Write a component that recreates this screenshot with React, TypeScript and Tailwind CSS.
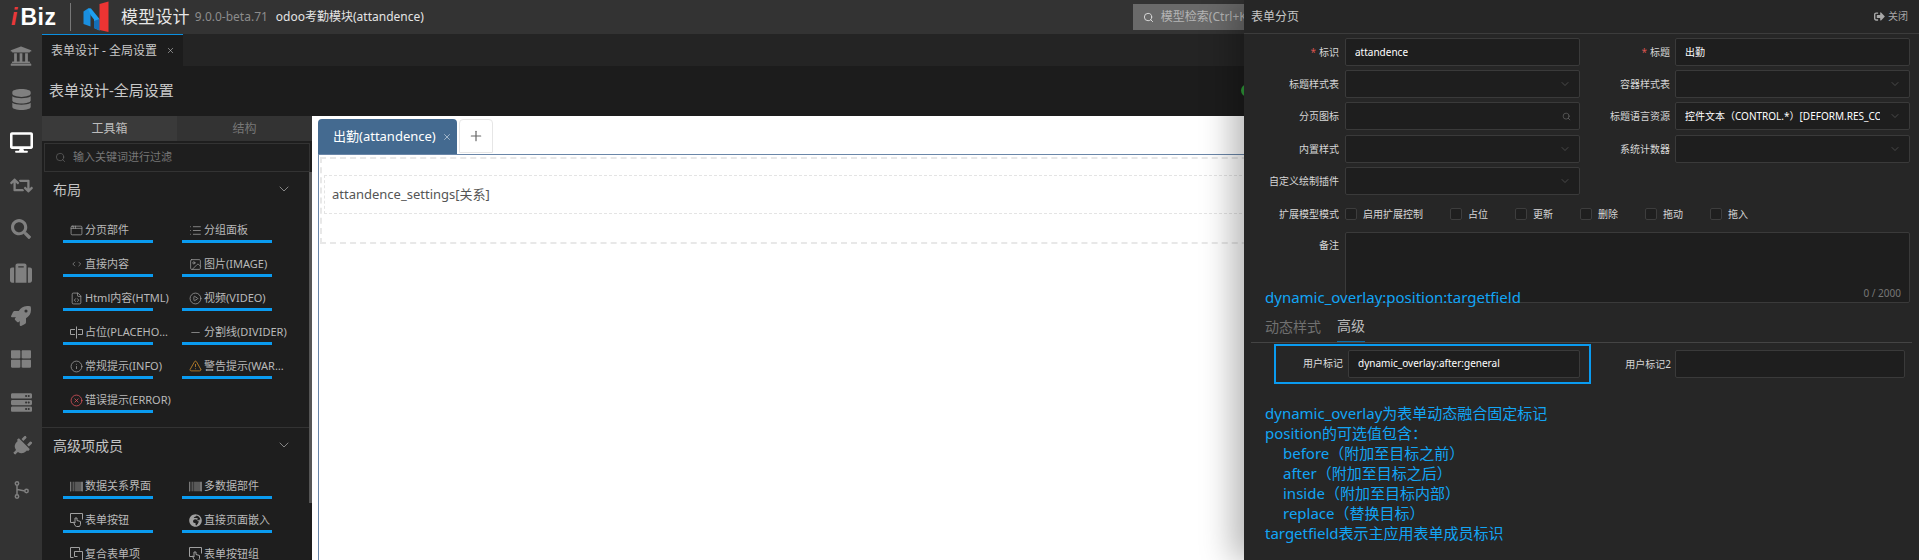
import type { ReactNode } from "react";
import {
  FaBarcode,
  FaDatabase,
  FaDesktop,
  FaGlobeAfrica,
  FaPlug,
  FaRetweet,
  FaRocket,
  FaSearch,
  FaServer,
  FaSignOutAlt,
  FaSuitcase,
  FaThLarge,
  FaUniversity,
} from "react-icons/fa";
import {
  AppWindow,
  ChevronDown,
  ChevronLeft,
  ChevronRight,
  CirclePlay,
  CircleX,
  FileCode,
  Image,
  Info,
  List,
  Minus,
  Plus,
  Search,
  TriangleAlert,
  X,
} from "lucide-react";

function BranchIcon() {
  return (
    <svg width="15" height="18" viewBox="0 0 15 18" fill="none" stroke="currentColor" strokeWidth="1.5">
      <circle cx="3" cy="2.5" r="1.7" />
      <circle cx="3" cy="15.5" r="1.7" />
      <circle cx="12.5" cy="10" r="1.7" />
      <path d="M3 4.2V13.8M3.5 8.5L10.8 10" />
    </svg>
  );
}

const railIcons: ReactNode[] = [
  <FaUniversity size={22} />,
  <FaDatabase size={21} />,
  <FaDesktop size={23} />,
  <FaRetweet size={23} />,
  <FaSearch size={20} />,
  <FaSuitcase size={22} />,
  <FaRocket size={20} />,
  <FaThLarge size={20} />,
  <FaServer size={21} />,
  <FaPlug size={21} className="rotate-45" />,
  <BranchIcon />,
];

function CodeIcon() {
  return (
    <span className="flex w-[13px] items-center">
      <ChevronLeft size={8} strokeWidth={2} />
      <ChevronRight size={8} strokeWidth={2} className="-ml-[2px]" />
    </span>
  );
}

function PlaceholderIcon() {
  return (
    <svg width="13" height="13" viewBox="0 0 13 13" fill="none" stroke="currentColor">
      <path d="M6.5 0.5v12M5 3.5H0.5v5H5M8 3.5h4.5v5H8" />
    </svg>
  );
}

function PointerBoxIcon() {
  return (
    <svg width="13" height="14" viewBox="0 0 13 14" fill="none" stroke="currentColor">
      <path d="M4 9.5H0.5v-9h12v6" />
      <path d="M5 5v5L3.5 9 5 12.5l1.5 1h3l1-2V8.5L7 7.5V5z" fill="#1e1e1e" />
    </svg>
  );
}

function CompoundIcon() {
  return (
    <svg width="13" height="14" viewBox="0 0 13 14" fill="none" stroke="currentColor">
      <path d="M3.5 10.5H0.5v-10h9v3" />
      <path d="M4.5 4.5h8v9h-6M4.5 4.5v5h3" />
    </svg>
  );
}

type ToolItem = { icon: ReactNode; label: string; wide?: boolean };

const layoutItems: ToolItem[] = [
  { icon: <AppWindow size={13} strokeWidth={1.4} />, label: "分页部件" },
  { icon: <List size={13} strokeWidth={1.4} />, label: "分组面板" },
  { icon: <CodeIcon />, label: "直接内容" },
  { icon: <Image size={13} strokeWidth={1.4} />, label: "图片(IMAGE)" },
  { icon: <FileCode size={13} strokeWidth={1.4} />, label: "Html内容(HTML)" },
  { icon: <CirclePlay size={13} strokeWidth={1.4} />, label: "视频(VIDEO)" },
  { icon: <PlaceholderIcon />, label: "占位(PLACEHOLDER)" },
  { icon: <Minus size={13} strokeWidth={1.4} />, label: "分割线(DIVIDER)" },
  { icon: <Info size={13} strokeWidth={1.4} />, label: "常规提示(INFO)" },
  {
    icon: <TriangleAlert size={14} strokeWidth={1.4} className="text-[#d8912a]" />,
    label: "警告提示(WARNING)",
  },
  {
    icon: <CircleX size={13} strokeWidth={1.4} className="text-[#e0555f]" />,
    label: "错误提示(ERROR)",
    wide: true,
  },
];

const advancedItems: ToolItem[] = [
  { icon: <FaBarcode size={13} />, label: "数据关系界面" },
  { icon: <FaBarcode size={13} />, label: "多数据部件" },
  { icon: <PointerBoxIcon />, label: "表单按钮" },
  { icon: <FaGlobeAfrica size={13} />, label: "直接页面嵌入" },
  { icon: <CompoundIcon />, label: "复合表单项" },
  { icon: <PointerBoxIcon />, label: "表单按钮组" },
];

function ToolGrid({ items }: { items: ToolItem[] }) {
  return (
    <div className="grid grid-cols-[119px_119px] pl-[21px]">
      {items.map((item) => (
        <div key={item.label} className="flex h-[34px] flex-col justify-end">
          <div className="flex h-[18px] items-center gap-[2px] pl-[7px] text-[11px] leading-[14px] text-[#b9b9b9]">
            <span className="flex w-[13px] shrink-0 justify-center text-[#a0a0a0]">{item.icon}</span>
            <span className={`truncate ${item.wide ? "w-[95px]" : "w-[85px]"}`}>{item.label}</span>
          </div>
          <div className="mt-px h-[3px] w-[90px] bg-[#0a9bf0]" />
        </div>
      ))}
    </div>
  );
}

function SectionHead({ title }: { title: string }) {
  return (
    <div className="flex h-[37px] items-start justify-between pl-[11px] pr-[17px] pt-[8px]">
      <span className="text-[14px] leading-[20px] text-[#c4c4c4]">{title}</span>
      <ChevronDown size={16} strokeWidth={1.2} className="mt-[1px] text-[#a0a0a0]" />
    </div>
  );
}

function FieldLabel({ text, required, width }: { text: string; required?: boolean; width: string }) {
  return (
    <div className={`${width} shrink-0 text-right text-[10px] leading-[28px] text-[#d6d6d6]`}>
      {required && <span className="mr-[3px] text-[#d9534f]">*</span>}
      {text}
    </div>
  );
}

function Field({
  value,
  icon,
  width = "w-[235px]",
}: {
  value?: string;
  icon?: ReactNode;
  width?: string;
}) {
  return (
    <div
      className={`${width} flex h-[28px] shrink-0 items-center justify-between overflow-hidden rounded-[2px] border border-[#3a3a3a] bg-[#1e1e1e] pl-[9px] pr-[8px] text-[10px] text-white`}
    >
      <span className="max-w-[195px] overflow-hidden whitespace-nowrap">{value}</span>
      {icon}
    </div>
  );
}

const chevron = <ChevronDown size={12} strokeWidth={1.2} className="shrink-0 text-[#666]" />;
const lens = <Search size={9} strokeWidth={1.5} className="shrink-0 text-[#777]" />;

function Check({ label }: { label: string }) {
  return (
    <div className="flex items-center gap-[6px] text-[10px] text-[#d6d6d6]">
      <span className="h-[12px] w-[12px] rounded-[2px] border border-[#3d3d3d] bg-[#1f1f1f]" />
      {label}
    </div>
  );
}

function Logo() {
  return (
    <svg width="36" height="34" viewBox="0 0 36 34" className="ml-[8px] shrink-0">
      <path d="M4.5 11.5L9 8.5H11.5V26.5L4.5 24Z" fill="#1a8fe0" />
      <path d="M9 8.5H12L20.5 19V30.5L15 28V19.5L11.5 15Z" fill="#1e9ff0" />
      <path d="M15 21L20.5 19V30.5L15 28Z" fill="#156fb8" />
      <path d="M20.5 4L29.5 1.5V32L20.5 30Z" fill="#ec3433" />
    </svg>
  );
}

export default function App() {
  return (
    <div className="relative h-[560px] w-[1919px] overflow-hidden bg-[#1c1c1c] font-['Noto_Sans','Noto_Sans_CJK_SC',sans-serif]">
      {/* 顶栏 */}
      <header className="flex h-[34px] items-center bg-[#333333]">
        <div className="ml-[11px] flex w-[47px] items-baseline font-['Liberation_Sans',sans-serif] text-[23px] font-bold leading-[30px] text-white">
          <span className="mr-[3px] italic text-[#e8383a]">i</span>
          <span className="tracking-[0.5px]">Biz</span>
        </div>
        <div className="ml-[12px] h-[28px] w-px bg-[#777]" />
        <Logo />
        <span className="ml-[6px] text-[17px] leading-[24px] tracking-[0.2px] text-[#e6e6e6]">模型设计</span>
        <span className="ml-[5px] text-[12px] text-[#8c8c8c]">9.0.0-beta.71</span>
        <span className="ml-[8px] text-[12px] text-[#e4e4e4]">odoo考勤模块(attandence)</span>
        <div className="ml-[709px] flex h-[26px] w-[200px] items-center gap-[7px] bg-[#6a6a6a] pl-[10px] text-[12px] text-[#b5b5b5]">
          <Search size={11} strokeWidth={2} className="text-[#e0e0e0]" />
          模型检索(Ctrl+K)
        </div>
      </header>

      <div className="flex h-[526px]">
        {/* 左侧图标栏 */}
        <nav className="flex w-[42px] shrink-0 flex-col bg-[#333333]">
          {railIcons.map((icon, i) => (
            <div
              key={i}
              className={`flex h-[43.4px] items-center justify-center ${i === 2 ? "text-white" : "text-[#808080]"}`}
            >
              {icon}
            </div>
          ))}
        </nav>

        <div className="flex min-w-0 flex-1 flex-col">
          {/* 标签栏 */}
          <div className="flex h-[32px] bg-[#242424]">
            <div className="flex w-[141px] items-center gap-[9px] border-t border-[#0a8fe0] bg-[#1c1c1c] pl-[9px] text-[12px] text-[#c8c8c8]">
              表单设计 - 全局设置
              <X size={9} strokeWidth={1.5} />
            </div>
          </div>

          <div className="flex h-[50px] items-center bg-[#1c1c1c] pb-[2px] pl-[7px]">
            <span className="text-[15px] leading-[20px] text-[#c8c8c8]">表单设计-全局设置</span>
            <span className="ml-[1067px] h-[13px] w-[13px] rounded-full bg-[#2f9e3a]" />
          </div>

          <div className="flex min-h-0 flex-1">
            {/* 工具箱 */}
            <aside className="relative flex w-[270px] shrink-0 flex-col overflow-hidden bg-[#1e1e1e]">
              <div className="flex h-[25px] shrink-0 text-[12px] leading-[25px]">
                <div className="w-[135px] bg-[#3a3a3a] text-center text-[#bdbdbd]">工具箱</div>
                <div className="w-[135px] bg-[#333333] text-center text-[#777]">结构</div>
              </div>
              <div className="mx-[2px] mt-[2px] flex h-[29px] shrink-0 items-center gap-[7px] border border-[#333] pl-[10px] text-[11px] text-[#777]">
                <Search size={11} strokeWidth={1.2} />
                输入关键词进行过滤
              </div>
              <div className="pr-[3px]">
                <SectionHead title="布局" />
                <ToolGrid items={layoutItems} />
                <div className="mt-[14px] h-px bg-[#333]" />
                <SectionHead title="高级项成员" />
                <ToolGrid items={advancedItems} />
              </div>
              <div className="absolute right-0 top-[56px] h-[331px] w-[3px] bg-[#555]" />
            </aside>

            {/* 表单画布 */}
            <main className="min-w-0 flex-1 bg-white pl-[6px] pt-[3px]">
              <div className="flex h-[35px]">
                <div className="flex w-[139px] items-center gap-[6px] rounded-t-[4px] bg-[#446a90] pl-[15px] text-[13px] text-white">
                  出勤(attandence)
                  <X size={10} strokeWidth={1.5} className="text-[#d8e2ee]" />
                </div>
                <div className="ml-[2px] flex h-[34px] w-[34px] items-center justify-center rounded-t-[4px] border border-[#e6e6e6] text-[#666]">
                  <Plus size={16} strokeWidth={1.8} />
                </div>
              </div>
              <div className="h-[410px] border-l border-t border-[#6a86a8] pl-px pt-[2px]">
                <div className="h-[87px] border-2 border-dashed border-[#e8e8e8] pl-[2px] pt-[16px]">
                  <div className="h-[39px] border border-dashed border-[#e4e4e4] pl-[7px] text-[13px] leading-[37px] text-[#555]">
                    attandence_settings[关系]
                  </div>
                </div>
              </div>
            </main>
          </div>
        </div>
      </div>

      {/* 右侧属性面板 */}
      <section className="absolute right-0 top-0 h-[560px] w-[675px] bg-[#262626] shadow-[-12px_0_30px_rgba(0,0,0,0.28)]">
        <div className="flex h-[34px] items-center justify-between border-b border-[#3c3c3c] pl-[7px] pr-[11px]">
          <span className="text-[12px] text-[#c8c8c8]">表单分页</span>
          <span className="flex items-center gap-[3px] text-[10px] text-[#a8a8a8]">
            <FaSignOutAlt size={11} />
            关闭
          </span>
        </div>
        <div className="flex flex-col gap-[4px] pt-[4px]">
          <div className="flex">
            <FieldLabel text="标识" required width="w-[95px]" />
            <div className="ml-[6px]"><Field value="attandence" /></div>
            <FieldLabel text="标题" required width="w-[90px]" />
            <div className="ml-[5px]"><Field value="出勤" /></div>
          </div>
          <div className="flex">
            <FieldLabel text="标题样式表" width="w-[95px]" />
            <div className="ml-[6px]"><Field icon={chevron} /></div>
            <FieldLabel text="容器样式表" width="w-[90px]" />
            <div className="ml-[5px]"><Field icon={chevron} /></div>
          </div>
          <div className="flex">
            <FieldLabel text="分页图标" width="w-[95px]" />
            <div className="ml-[6px]"><Field icon={lens} /></div>
            <FieldLabel text="标题语言资源" width="w-[90px]" />
            <div className="ml-[5px]">
              <Field value="控件文本（CONTROL.*）[DEFORM.RES_CONTROL]" icon={chevron} />
            </div>
          </div>
          <div className="mt-px flex">
            <FieldLabel text="内置样式" width="w-[95px]" />
            <div className="ml-[6px]"><Field icon={chevron} /></div>
            <FieldLabel text="系统计数器" width="w-[90px]" />
            <div className="ml-[5px]"><Field icon={chevron} /></div>
          </div>
          <div className="flex">
            <FieldLabel text="自定义绘制插件" width="w-[95px]" />
            <div className="ml-[6px]"><Field icon={chevron} /></div>
          </div>
        </div>

        <div className="mt-[13px] flex h-[12px] items-center">
          <div className="w-[95px] text-right text-[10px] text-[#d6d6d6]">扩展模型模式</div>
          <div className="ml-[6px] flex gap-[27px]">
            {["启用扩展控制", "占位", "更新", "删除", "拖动", "拖入"].map((c) => (
              <Check key={c} label={c} />
            ))}
          </div>
        </div>

        <div className="relative mt-[12px] flex h-[71px]">
          <div className="w-[95px] text-right text-[10px] leading-[26px] text-[#d6d6d6]">备注</div>
          <div className="relative ml-[6px] h-[71px] w-[565px] rounded-[2px] border border-[#3a3a3a] bg-[#1e1e1e]">
            <span className="absolute bottom-[1px] right-[8px] text-[10px] text-[#777]">0 / 2000</span>
          </div>
          <span className="absolute left-[21px] top-[55px] text-[15px] leading-[20px] text-[#12a5f5]">
            dynamic_overlay:position:targetfield
          </span>
        </div>

        <div className="ml-[7px] mr-[7px] flex h-[40px] items-end gap-[16px] border-b border-[#444] pl-[14px] text-[14px] leading-[31px]">
          <span className="text-[#707070]">动态样式</span>
          <span className="border-b border-[#0c6ca6] text-[#bcbcbc]">高级</span>
        </div>

        <div className="flex h-[40px] items-center pt-[1px]">
          <div className="ml-[30px] flex h-[40px] w-[317px] items-center border-2 border-[#0a9bf0]">
            <div className="w-[67px] text-right text-[10px] text-[#dcdcdc]">用户标记</div>
            <div className="ml-[5px]">
              <Field value="dynamic_overlay:after:general" width="w-[232px]" />
            </div>
          </div>
          <FieldLabel text="用户标记2" width="w-[80px]" />
          <div className="ml-[4px]"><Field width="w-[230px]" /></div>
        </div>

        <div className="mt-[20px] pl-[21px] text-[15px] leading-[20px] text-[#12a5f5]">
          <p>dynamic_overlay为表单动态融合固定标记</p>
          <p>position的可选值包含：</p>
          <p className="pl-[18px]">before（附加至目标之前）</p>
          <p className="pl-[18px]">after（附加至目标之后）</p>
          <p className="pl-[18px]">inside（附加至目标内部）</p>
          <p className="pl-[18px]">replace（替换目标）</p>
          <p>targetfield表示主应用表单成员标识</p>
        </div>
      </section>
    </div>
  );
}
